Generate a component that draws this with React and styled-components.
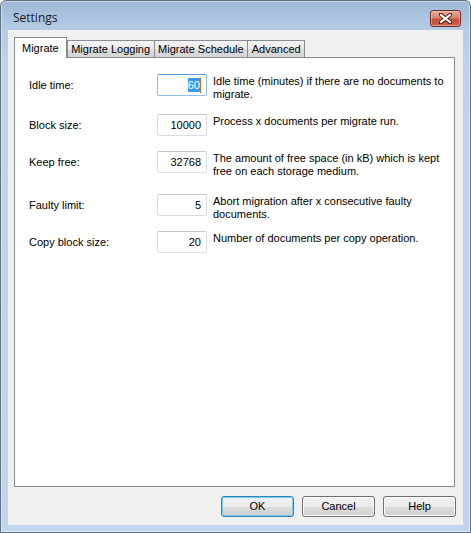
import React from 'react'
import styled, { createGlobalStyle } from 'styled-components'

const GlobalStyle = createGlobalStyle`
html, body {
  margin: 0;
  padding: 0;
  background: #ffffff;
}
body {
  font-family: "Liberation Sans", Arial, sans-serif;
  font-size: 11px;
  color: #000000;
}
`;

const Window = styled.div`
  width: 471px;
  height: 533px;
  box-sizing: border-box;
  border: 1px solid #5f6f80;
  border-radius: 6px 6px 0 0;
  box-shadow: inset 0 0 0 1px rgba(255, 255, 255, 0.45);
  background: linear-gradient(to bottom, #9fb9d5 0px, #b3cbe5 28px, #bcd3eb 60px, #c0d6ee 100%);
  padding: 0 7px 7px 7px;
  display: flex;
  flex-direction: column;
  overflow: hidden;
`;

const TitleBar = styled.div`
  height: 29px;
  display: flex;
  justify-content: space-between;
  align-items: flex-start;
`;

const Title = styled.div`
  font-family: "Open Sans", "Noto Sans", sans-serif;
  font-size: 12px;
  line-height: 16px;
  color: #1b1b1b;
  margin-top: 9px;
  padding-left: 5px;
`;

const CloseButton = styled.div`
  width: 31px;
  height: 17px;
  margin-top: 9px;
  margin-right: 2px;
  box-sizing: border-box;
  border: 1px solid #6b2a22;
  border-radius: 3px;
  background: linear-gradient(to bottom, #e9a99a 0%, #d98471 45%, #c4513c 55%, #c95f49 100%);
  box-shadow: inset 0 0 0 1px rgba(255, 220, 210, 0.45);
  display: flex;
  align-items: center;
  justify-content: center;
`;

const Client = styled.div`
  flex: 1;
  background: #f0f0f0;
  display: flex;
  flex-direction: column;
  padding: 7px 7px 8px 6px;
`;

const TabStrip = styled.div`
  display: flex;
  align-items: flex-end;
  height: 20px;
`;

const Tab = styled.div`
  box-sizing: border-box;
  height: ${p => (p.$active ? '21px' : '17px')};
  margin-bottom: ${p => (p.$active ? '-1px' : '0')};
  padding: ${p => (p.$active ? '0 7px' : '1px 3.5px 0')};
  border: 1px solid #898c95;
  border-bottom: none;
  margin-right: ${p => (p.$active ? '0' : '-1px')};
  background: ${p => (p.$active ? '#ffffff' : 'linear-gradient(to bottom, #f3f3f3 0%, #ebebeb 50%, #dddddd 51%, #d5d5d5 100%)')};
  position: relative;
  z-index: ${p => (p.$active ? 1 : 0)};
  display: flex;
  align-items: center;
  line-height: 13px;
  white-space: nowrap;
  flex-shrink: 0;
`;

const Panel = styled.div`
  flex: 1;
  margin-right: 1px;
  border: 1px solid #898c95;
  background: #ffffff;
  padding: 0 0 0 14px;
  display: flex;
  flex-direction: column;
`;

const Row = styled.div`
  display: flex;
  align-items: flex-start;
  margin-top: ${p => p.$top}px;
`;

const Label = styled.div`
  width: 128px;
  flex-shrink: 0;
  height: 22px;
  display: flex;
  align-items: center;
  line-height: 13px;
  padding-top: 1px;
  box-sizing: border-box;
`;

const Field = styled.div`
  width: 50px;
  flex-shrink: 0;
  height: 22px;
  box-sizing: border-box;
  border: 1px solid ${p => (p.$focused ? '#8fbfe6' : '#d9dce0')};
  border-top-color: ${p => (p.$focused ? '#569de5' : '#c4c7cc')};
  border-radius: 2px;
  background: #ffffff;
  display: flex;
  align-items: center;
  justify-content: flex-end;
  padding-right: 5px;
  line-height: 13px;
`;

const Selected = styled.span`
  background: #3399ff;
  color: #ffffff;
  line-height: 14px;
`;

const Caret = styled.span`
  display: inline-block;
  width: 1px;
  height: 15px;
  background: #d26a12;
`;

const Description = styled.div`
  width: 236px;
  flex-shrink: 0;
  margin-left: 6px;
  line-height: 13px;
  padding-top: 1px;
`;

const ButtonRow = styled.div`
  display: flex;
  justify-content: flex-end;
  gap: 8px;
  margin-top: 9px;
`;

const Button = styled.div`
  width: 73px;
  height: 21px;
  box-sizing: border-box;
  border: 1px solid ${p => (p.$default ? '#3c7fb1' : '#707070')};
  border-radius: 3px;
  background: linear-gradient(to bottom, #f2f2f2 0%, #ebebeb 50%, #dddddd 51%, #cfcfcf 100%);
  box-shadow: inset 0 0 0 1px ${p => (p.$default ? '#6cd0f5' : '#fbfbfb')};
  display: flex;
  align-items: center;
  justify-content: center;
  line-height: 13px;
`;

const rows = [
  { label: 'Idle time:', value: '60', text: 'Idle time (minutes) if there are no documents to migrate.', top: 16, focused: true },
  { label: 'Block size:', value: '10000', text: 'Process x documents per migrate run.', top: 13 },
  { label: 'Keep free:', value: '32768', text: 'The amount of free space (in kB) which is kept free on each storage medium.', top: 15 },
  { label: 'Faulty limit:', value: '5', text: 'Abort migration after x consecutive faulty documents.', top: 16 },
  { label: 'Copy block size:', value: '20', text: 'Number of documents per copy operation.', top: 10 },
]

const tabs = ['Migrate', 'Migrate Logging', 'Migrate Schedule', 'Advanced']

const App = () => {
  return (
    <>
      <GlobalStyle />
      <Window>
        <TitleBar>
          <Title>Settings</Title>
          <CloseButton>
            <svg width="13" height="11" viewBox="0 0 13 11">
              <path
                d="M1.5 1.5 L11.5 9.5 M11.5 1.5 L1.5 9.5"
                stroke="#4a1a14"
                strokeWidth="4"
                strokeLinecap="square"
                fill="none"
              />
              <path
                d="M2 2 L11 9 M11 2 L2 9"
                stroke="#ffffff"
                strokeWidth="2.2"
                strokeLinecap="square"
                fill="none"
              />
            </svg>
          </CloseButton>
        </TitleBar>
        <Client>
          <TabStrip>
            {tabs.map((t, i) => (
              <Tab key={t} $active={i === 0}>{t}</Tab>
            ))}
          </TabStrip>
          <Panel>
            {rows.map(r => (
              <Row key={r.label} $top={r.top}>
                <Label>{r.label}</Label>
                <Field $focused={r.focused}>
                  {r.focused ? (
                    <>
                      <Selected>{r.value}</Selected>
                      <Caret />
                    </>
                  ) : r.value}
                </Field>
                <Description>{r.text}</Description>
              </Row>
            ))}
          </Panel>
          <ButtonRow>
            <Button $default>OK</Button>
            <Button>Cancel</Button>
            <Button>Help</Button>
          </ButtonRow>
        </Client>
      </Window>
    </>
  )
}

export default App
